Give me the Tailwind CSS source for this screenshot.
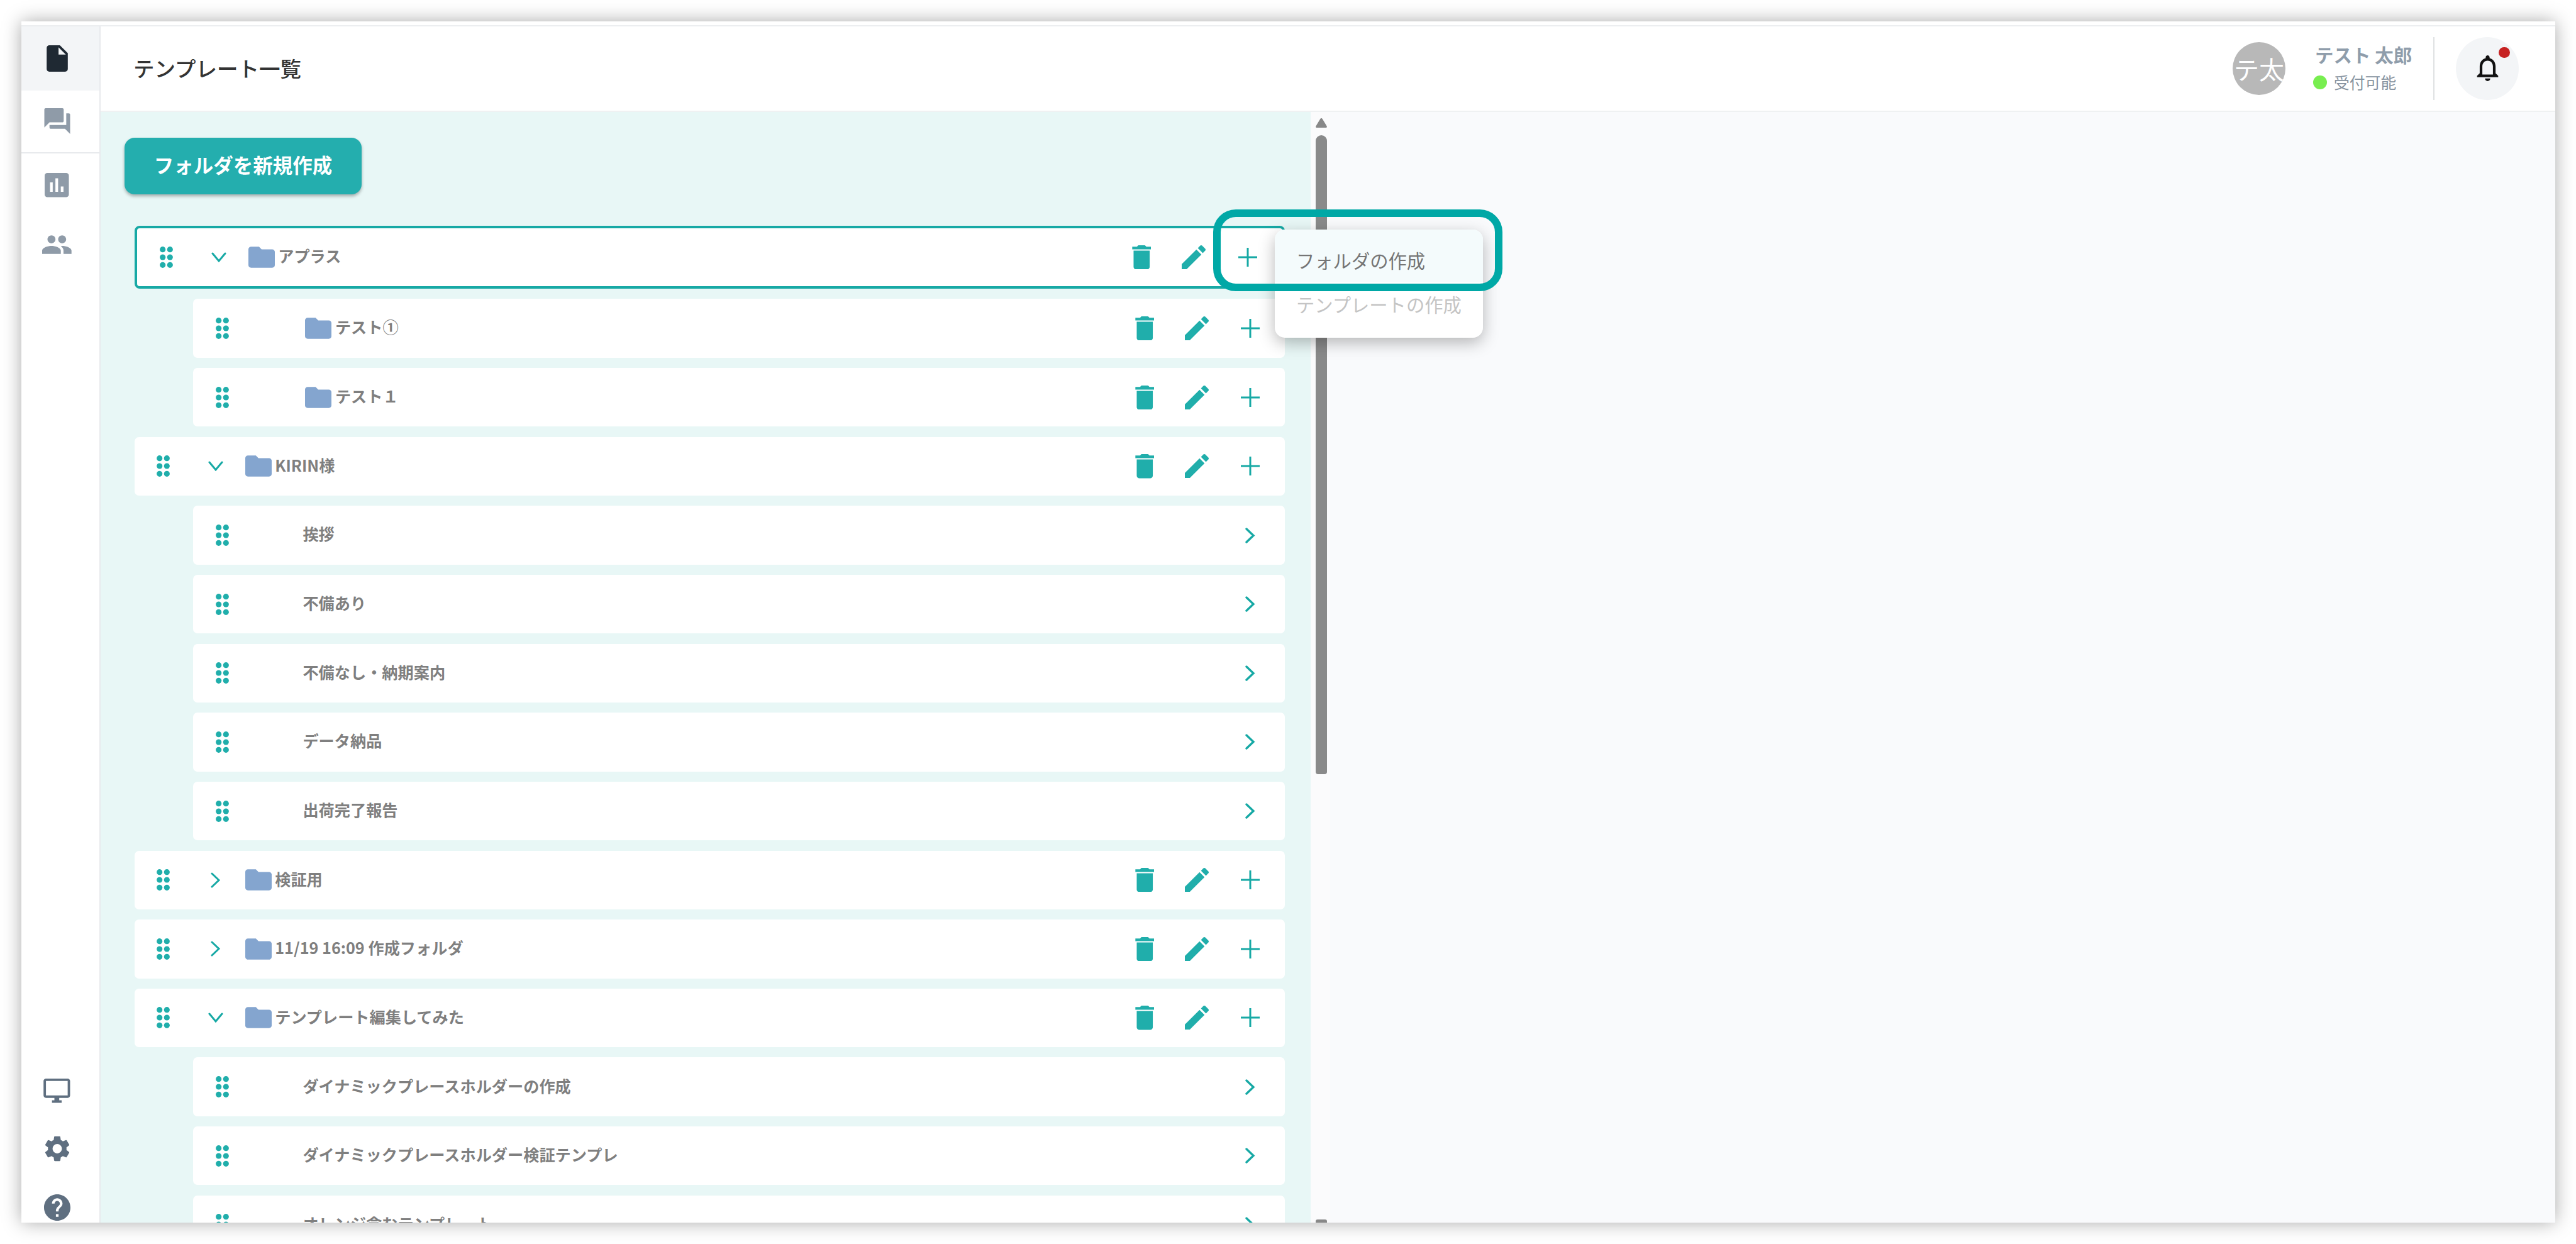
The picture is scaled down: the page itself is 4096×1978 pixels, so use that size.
<!DOCTYPE html>
<html lang="ja">
<head>
<meta charset="utf-8">
<title>テンプレート一覧</title>
<script src="https://cdn.jsdelivr.net/npm/@tailwindcss/browser@4"></script>
</head>
<body class="m-0 bg-white">
<div class="relative w-[4096px] h-[1978px] overflow-hidden bg-white pl-[34px] pt-[34px] font-['Noto_Sans_CJK_JP','Noto_Sans',sans-serif]">
  <div class="flex flex-col w-[4029px] h-[1910px] bg-white overflow-hidden shadow-[0_0_28px_rgba(0,0,0,0.34)]">
    <div class="h-[8px] shrink-0 border-b-2 border-[#eceef0]"></div>
    <div class="flex flex-1 min-h-0">
      <!-- sidebar -->
      <aside class="flex flex-col w-[126px] shrink-0 border-r-2 border-[#e8eaed]">
        <div class="flex items-center justify-center h-[101.5px] pr-[11px] bg-[#f3f5f7]">
          <svg class="w-[34px] h-[42px]" viewBox="4 2 16 20" fill="#1f2933"><path d="M6 2c-1.1 0-1.99.9-1.99 2L4 20c0 1.1.89 2 1.99 2H18c1.1 0 2-.9 2-2V8l-6-6H6zm7 7V3.5L18.5 9H13z"/></svg>
        </div>
        <div class="flex items-center justify-center h-[100px] pr-[11px] border-b-2 border-[#e8eaed]">
          <svg class="w-[42px] h-[41px]" viewBox="2 2 20 20" fill="#8f9ba8"><path d="M21 6h-2v9H6v2c0 .55.45 1 1 1h11l4 4V7c0-.55-.45-1-1-1zm-4 6V3c0-.55-.45-1-1-1H3c-.55 0-1 .45-1 1v14l4-4h10c.55 0 1-.45 1-1z"/></svg>
        </div>
        <div class="flex items-center justify-center h-[102px] pr-[11px]">
          <svg class="w-[38.5px] h-[38.5px]" viewBox="3 3 18 18" fill="#8f9ba8"><path d="M19 3H5c-1.1 0-2 .9-2 2v14c0 1.1.9 2 2 2h14c1.1 0 2-.9 2-2V5c0-1.1-.9-2-2-2zM9 17H7v-7h2v7zm4 0h-2V7h2v10zm4 0h-2v-4h2v4z"/></svg>
        </div>
        <div class="flex items-center justify-center h-[86px] pr-[11px]">
          <svg class="w-[46.7px] h-[30px]" viewBox="1 5 22 14" fill="#8f9ba8"><path d="M16 11c1.66 0 2.99-1.34 2.99-3S17.66 5 16 5c-1.66 0-3 1.34-3 3s1.34 3 3 3zm-8 0c1.66 0 2.99-1.34 2.99-3S9.66 5 8 5C6.34 5 5 6.34 5 8s1.34 3 3 3zm0 2c-2.33 0-7 1.17-7 3.5V19h14v-2.5c0-2.33-4.67-3.5-7-3.5zm8 0c-.29 0-.62.02-.97.05 1.16.84 1.97 1.97 1.97 3.45V19h6v-2.5c0-2.33-4.67-3.5-7-3.5z"/></svg>
        </div>
        <div class="mt-auto flex flex-col items-center gap-[52px] pb-[3.5px] pr-[11px]">
          <svg class="w-[46.7px] h-[38.4px]" viewBox="1 2 22 20" fill="#5f6f80"><path d="M21 2H3c-1.1 0-2 .9-2 2v12c0 1.1.9 2 2 2h7v2H8v2h8v-2h-2v-2h7c1.1 0 2-.9 2-2V4c0-1.1-.9-2-2-2zm0 14H3V4h18v12z"/></svg>
          <svg class="w-[40px] h-[41px]" viewBox="2.5 2 19 20" fill="#5f6f80"><path d="M19.14 12.94c.04-.3.06-.61.06-.94 0-.32-.02-.64-.07-.94l2.03-1.58c.18-.14.23-.41.12-.61l-1.92-3.32c-.12-.22-.37-.29-.59-.22l-2.39.96c-.5-.38-1.03-.7-1.62-.94l-.36-2.54c-.04-.24-.24-.41-.48-.41h-3.84c-.24 0-.43.17-.47.41l-.36 2.54c-.59.24-1.13.57-1.62.94l-2.39-.96c-.22-.08-.47 0-.59.22L2.74 8.87c-.12.21-.08.47.12.61l2.03 1.58c-.05.3-.09.63-.09.94s.02.64.07.94l-2.03 1.58c-.18.14-.23.41-.12.61l1.92 3.32c.12.22.37.29.59.22l2.39-.96c.5.38 1.03.7 1.62.94l.36 2.54c.05.24.24.41.48.41h3.84c.24 0 .44-.17.47-.41l.36-2.54c.59-.24 1.13-.56 1.62-.94l2.39.96c.22.08.47 0 .59-.22l1.92-3.32c.12-.22.07-.47-.12-.61l-2.01-1.58zM12 15.6c-1.98 0-3.6-1.62-3.6-3.6s1.62-3.6 3.6-3.6 3.6 1.62 3.6 3.6-1.62 3.6-3.6 3.6z"/></svg>
          <svg class="w-[42px] h-[42px]" viewBox="2 2 20 20" fill="#5f6f80"><path d="M12 2C6.48 2 2 6.48 2 12s4.48 10 10 10 10-4.48 10-10S17.52 2 12 2zm1 17h-2v-2h2v2zm2.07-7.75l-.9.92C13.45 12.9 13 13.5 13 15h-2v-.5c0-1.1.45-2.1 1.17-2.83l1.24-1.26c.37-.36.59-.86.59-1.41 0-1.1-.9-2-2-2s-2 .9-2 2H8c0-2.21 1.79-4 4-4s4 1.79 4 4c0 .88-.36 1.68-.93 2.25z"/></svg>
        </div>
      </aside>
      <!-- main -->
      <div class="flex flex-col flex-1 min-w-0">
        <header class="flex items-center h-[135.5px] shrink-0 pl-[52px] pr-[58px] border-b-2 border-[#eff1f2]">
          <h1 class="pb-[3px] text-[33.5px] leading-none font-medium text-[#333333]">テンプレート一覧</h1>
          <div class="ml-auto flex items-center">
            <div class="flex items-center justify-center w-[84px] h-[84px] rounded-full bg-[#b8b8b8] text-white text-[40px] leading-none whitespace-nowrap overflow-hidden">テ太</div>
            <div class="flex flex-col w-[191px] ml-[44px] gap-[15px]">
              <div class="pl-[3px] text-[29.5px] leading-[29px] font-bold text-[#8f9dab] whitespace-nowrap">テスト 太郎</div>
              <div class="flex items-center">
                <span class="w-[22px] h-[22px] rounded-full bg-[#78ee50]"></span>
                <span class="ml-[11px] text-[24.8px] leading-[29px] text-[#8693a0]">受付可能</span>
              </div>
            </div>
            <div class="w-[2px] h-[100px] bg-[#dfe1e3]"></div>
            <div class="relative flex items-center justify-center w-[100px] h-[100px] ml-[34px] rounded-full bg-[#f3f5f7]">
              <svg class="w-[35px] h-[41px]" viewBox="4 2.5 16 19.5" fill="#111111"><path d="M12 22c1.1 0 2-.9 2-2h-4c0 1.1.9 2 2 2zm6-6v-5c0-3.07-1.63-5.64-4.5-6.32V4c0-.83-.67-1.5-1.5-1.5s-1.5.67-1.5 1.5v.68C7.64 5.36 6 7.92 6 11v5l-2 2v1h16v-1l-2-2zm-2 1H8v-6c0-2.48 1.51-4.5 4-4.5s4 2.02 4 4.5v6z"/></svg>
              <span class="absolute left-[68px] top-[16px] w-[17.5px] h-[17.5px] rounded-full bg-[#c62222]"></span>
            </div>
          </div>
        </header>
        <div class="flex flex-1 min-h-0 bg-[#f9fafc]">
          <!-- list panel -->
          <section class="w-[1924px] shrink-0 overflow-hidden bg-[#e8f7f6] pt-[41px] pl-[38px]">
            <button class="flex items-center justify-center w-[377px] h-[90px] pb-[4px] rounded-[16px] bg-[#24aeae] text-white text-[31.5px] leading-none font-bold shadow-[0_3px_5px_rgba(0,0,0,0.3)]">フォルダを新規作成</button>
            <div class="flex flex-col gap-[16.35px] mt-[50px] ml-[15.7px] mr-[41px]">

              <!-- selected folder -->
              <div class="flex items-center shrink-0 h-[100.6px] rounded-[8px] bg-white border-4 border-[#17a9a5] pl-[36px] pr-[41px]">
                <svg class="w-[21px] h-[34px] shrink-0" viewBox="0 0 21 34" fill="#20aeab"><circle cx="4.7" cy="4.7" r="4.6"/><circle cx="16.3" cy="4.7" r="4.6"/><circle cx="4.7" cy="17" r="4.6"/><circle cx="16.3" cy="17" r="4.6"/><circle cx="4.7" cy="29.3" r="4.6"/><circle cx="16.3" cy="29.3" r="4.6"/></svg>
                <svg class="w-[24px] h-[16px] ml-[61px] shrink-0" viewBox="0 0 24 16" fill="none" stroke="#17a9a5" stroke-width="3" stroke-linecap="round"><path d="M2 2l10 12L22 2"/></svg>
                <svg class="w-[42px] h-[34px] ml-[35px] shrink-0" viewBox="2 4 20 16" fill="#84a5cf"><path d="M10 4H4c-1.1 0-2 .9-2 2v12c0 1.1.9 2 2 2h16c1.1 0 2-.9 2-2V8c0-1.1-.9-2-2-2h-8l-2-2z"/></svg>
                <span class="ml-[5.5px] pb-[4px] text-[25.2px] leading-none font-bold text-[#7f7f7f]">アプラス</span>
                <div class="ml-auto flex items-center">
                  <svg class="w-[30.5px] h-[38.4px]" viewBox="5 3 14 18" fill="#20aeab"><path d="M6 19c0 1.1.9 2 2 2h8c1.1 0 2-.9 2-2V7H6v12zM19 4h-3.5l-1-1h-5l-1 1H5v2h14V4z"/></svg>
                  <svg class="w-[38px] h-[38px] ml-[49px]" viewBox="3 3 18 18" fill="#20aeab"><path d="M3 17.25V21h3.75L17.81 9.94l-3.75-3.75L3 17.25zM20.71 7.04c.39-.39.39-1.02 0-1.41l-2.34-2.34c-.39-.39-1.02-.39-1.41 0l-1.83 1.83 3.75 3.75 1.83-1.83z"/></svg>
                  <svg class="w-[30px] h-[30px] ml-[52px] mr-[-1px]" viewBox="0 0 30 30" stroke="#17a9a5" stroke-width="3"><path d="M15 0v30M0 15h30"/></svg>
                </div>
              </div>

              <!-- テスト① -->
              <div class="flex items-center shrink-0 h-[93.3px] ml-[93.7px] rounded-[7px] bg-white pl-[36px] pr-[40px]">
                <svg class="w-[21px] h-[34px] shrink-0" viewBox="0 0 21 34" fill="#20aeab"><circle cx="4.7" cy="4.7" r="4.6"/><circle cx="16.3" cy="4.7" r="4.6"/><circle cx="4.7" cy="17" r="4.6"/><circle cx="16.3" cy="17" r="4.6"/><circle cx="4.7" cy="29.3" r="4.6"/><circle cx="16.3" cy="29.3" r="4.6"/></svg>
                <svg class="w-[42px] h-[34px] ml-[121px] shrink-0" viewBox="2 4 20 16" fill="#84a5cf"><path d="M10 4H4c-1.1 0-2 .9-2 2v12c0 1.1.9 2 2 2h16c1.1 0 2-.9 2-2V8c0-1.1-.9-2-2-2h-8l-2-2z"/></svg>
                <span class="ml-[5.5px] pb-[4px] text-[25.2px] leading-none font-bold text-[#7f7f7f]">テスト①</span>
                <div class="ml-auto flex items-center">
                  <svg class="w-[30.5px] h-[38.4px]" viewBox="5 3 14 18" fill="#20aeab"><path d="M6 19c0 1.1.9 2 2 2h8c1.1 0 2-.9 2-2V7H6v12zM19 4h-3.5l-1-1h-5l-1 1H5v2h14V4z"/></svg>
                  <svg class="w-[38px] h-[38px] ml-[49px]" viewBox="3 3 18 18" fill="#20aeab"><path d="M3 17.25V21h3.75L17.81 9.94l-3.75-3.75L3 17.25zM20.71 7.04c.39-.39.39-1.02 0-1.41l-2.34-2.34c-.39-.39-1.02-.39-1.41 0l-1.83 1.83 3.75 3.75 1.83-1.83z"/></svg>
                  <svg class="w-[30px] h-[30px] ml-[51px]" viewBox="0 0 30 30" stroke="#17a9a5" stroke-width="3"><path d="M15 0v30M0 15h30"/></svg>
                </div>
              </div>

              <!-- テスト１ -->
              <div class="flex items-center shrink-0 h-[93.3px] ml-[93.7px] rounded-[7px] bg-white pl-[36px] pr-[40px]">
                <svg class="w-[21px] h-[34px] shrink-0" viewBox="0 0 21 34" fill="#20aeab"><circle cx="4.7" cy="4.7" r="4.6"/><circle cx="16.3" cy="4.7" r="4.6"/><circle cx="4.7" cy="17" r="4.6"/><circle cx="16.3" cy="17" r="4.6"/><circle cx="4.7" cy="29.3" r="4.6"/><circle cx="16.3" cy="29.3" r="4.6"/></svg>
                <svg class="w-[42px] h-[34px] ml-[121px] shrink-0" viewBox="2 4 20 16" fill="#84a5cf"><path d="M10 4H4c-1.1 0-2 .9-2 2v12c0 1.1.9 2 2 2h16c1.1 0 2-.9 2-2V8c0-1.1-.9-2-2-2h-8l-2-2z"/></svg>
                <span class="ml-[5.5px] pb-[4px] text-[25.2px] leading-none font-bold text-[#7f7f7f]">テスト１</span>
                <div class="ml-auto flex items-center">
                  <svg class="w-[30.5px] h-[38.4px]" viewBox="5 3 14 18" fill="#20aeab"><path d="M6 19c0 1.1.9 2 2 2h8c1.1 0 2-.9 2-2V7H6v12zM19 4h-3.5l-1-1h-5l-1 1H5v2h14V4z"/></svg>
                  <svg class="w-[38px] h-[38px] ml-[49px]" viewBox="3 3 18 18" fill="#20aeab"><path d="M3 17.25V21h3.75L17.81 9.94l-3.75-3.75L3 17.25zM20.71 7.04c.39-.39.39-1.02 0-1.41l-2.34-2.34c-.39-.39-1.02-.39-1.41 0l-1.83 1.83 3.75 3.75 1.83-1.83z"/></svg>
                  <svg class="w-[30px] h-[30px] ml-[51px]" viewBox="0 0 30 30" stroke="#17a9a5" stroke-width="3"><path d="M15 0v30M0 15h30"/></svg>
                </div>
              </div>

              <!-- KIRIN様 -->
              <div class="flex items-center shrink-0 h-[93.3px] rounded-[7px] bg-white pl-[35px] pr-[40px]">
                <svg class="w-[21px] h-[34px] shrink-0" viewBox="0 0 21 34" fill="#20aeab"><circle cx="4.7" cy="4.7" r="4.6"/><circle cx="16.3" cy="4.7" r="4.6"/><circle cx="4.7" cy="17" r="4.6"/><circle cx="16.3" cy="17" r="4.6"/><circle cx="4.7" cy="29.3" r="4.6"/><circle cx="16.3" cy="29.3" r="4.6"/></svg>
                <svg class="w-[24px] h-[16px] ml-[61px] shrink-0" viewBox="0 0 24 16" fill="none" stroke="#17a9a5" stroke-width="3" stroke-linecap="round"><path d="M2 2l10 12L22 2"/></svg>
                <svg class="w-[42px] h-[34px] ml-[35px] shrink-0" viewBox="2 4 20 16" fill="#84a5cf"><path d="M10 4H4c-1.1 0-2 .9-2 2v12c0 1.1.9 2 2 2h16c1.1 0 2-.9 2-2V8c0-1.1-.9-2-2-2h-8l-2-2z"/></svg>
                <span class="ml-[5.5px] pb-[4px] text-[25.2px] leading-none font-bold text-[#7f7f7f]">KIRIN様</span>
                <div class="ml-auto flex items-center">
                  <svg class="w-[30.5px] h-[38.4px]" viewBox="5 3 14 18" fill="#20aeab"><path d="M6 19c0 1.1.9 2 2 2h8c1.1 0 2-.9 2-2V7H6v12zM19 4h-3.5l-1-1h-5l-1 1H5v2h14V4z"/></svg>
                  <svg class="w-[38px] h-[38px] ml-[49px]" viewBox="3 3 18 18" fill="#20aeab"><path d="M3 17.25V21h3.75L17.81 9.94l-3.75-3.75L3 17.25zM20.71 7.04c.39-.39.39-1.02 0-1.41l-2.34-2.34c-.39-.39-1.02-.39-1.41 0l-1.83 1.83 3.75 3.75 1.83-1.83z"/></svg>
                  <svg class="w-[30px] h-[30px] ml-[51px]" viewBox="0 0 30 30" stroke="#17a9a5" stroke-width="3"><path d="M15 0v30M0 15h30"/></svg>
                </div>
              </div>

              <!-- 挨拶 -->
              <div class="flex items-center shrink-0 h-[93.3px] ml-[93.7px] rounded-[7px] bg-white pl-[36px] pr-[47px]">
                <svg class="w-[21px] h-[34px] shrink-0" viewBox="0 0 21 34" fill="#20aeab"><circle cx="4.7" cy="4.7" r="4.6"/><circle cx="16.3" cy="4.7" r="4.6"/><circle cx="4.7" cy="17" r="4.6"/><circle cx="16.3" cy="17" r="4.6"/><circle cx="4.7" cy="29.3" r="4.6"/><circle cx="16.3" cy="29.3" r="4.6"/></svg>
                <span class="ml-[117px] pb-[4px] text-[25.2px] leading-none font-bold text-[#7f7f7f]">挨拶</span>
                <svg class="ml-auto w-[16px] h-[25px]" viewBox="0 0 16 25" fill="none" stroke="#17a9a5" stroke-width="3.4" stroke-linecap="round"><path d="M2 2l11 10.5L2 23"/></svg>
              </div>

              <!-- 不備あり -->
              <div class="flex items-center shrink-0 h-[93.3px] ml-[93.7px] rounded-[7px] bg-white pl-[36px] pr-[47px]">
                <svg class="w-[21px] h-[34px] shrink-0" viewBox="0 0 21 34" fill="#20aeab"><circle cx="4.7" cy="4.7" r="4.6"/><circle cx="16.3" cy="4.7" r="4.6"/><circle cx="4.7" cy="17" r="4.6"/><circle cx="16.3" cy="17" r="4.6"/><circle cx="4.7" cy="29.3" r="4.6"/><circle cx="16.3" cy="29.3" r="4.6"/></svg>
                <span class="ml-[117px] pb-[4px] text-[25.2px] leading-none font-bold text-[#7f7f7f]">不備あり</span>
                <svg class="ml-auto w-[16px] h-[25px]" viewBox="0 0 16 25" fill="none" stroke="#17a9a5" stroke-width="3.4" stroke-linecap="round"><path d="M2 2l11 10.5L2 23"/></svg>
              </div>

              <!-- 不備なし・納期案内 -->
              <div class="flex items-center shrink-0 h-[93.3px] ml-[93.7px] rounded-[7px] bg-white pl-[36px] pr-[47px]">
                <svg class="w-[21px] h-[34px] shrink-0" viewBox="0 0 21 34" fill="#20aeab"><circle cx="4.7" cy="4.7" r="4.6"/><circle cx="16.3" cy="4.7" r="4.6"/><circle cx="4.7" cy="17" r="4.6"/><circle cx="16.3" cy="17" r="4.6"/><circle cx="4.7" cy="29.3" r="4.6"/><circle cx="16.3" cy="29.3" r="4.6"/></svg>
                <span class="ml-[117px] pb-[4px] text-[25.2px] leading-none font-bold text-[#7f7f7f]">不備なし・納期案内</span>
                <svg class="ml-auto w-[16px] h-[25px]" viewBox="0 0 16 25" fill="none" stroke="#17a9a5" stroke-width="3.4" stroke-linecap="round"><path d="M2 2l11 10.5L2 23"/></svg>
              </div>

              <!-- データ納品 -->
              <div class="flex items-center shrink-0 h-[93.3px] ml-[93.7px] rounded-[7px] bg-white pl-[36px] pr-[47px]">
                <svg class="w-[21px] h-[34px] shrink-0" viewBox="0 0 21 34" fill="#20aeab"><circle cx="4.7" cy="4.7" r="4.6"/><circle cx="16.3" cy="4.7" r="4.6"/><circle cx="4.7" cy="17" r="4.6"/><circle cx="16.3" cy="17" r="4.6"/><circle cx="4.7" cy="29.3" r="4.6"/><circle cx="16.3" cy="29.3" r="4.6"/></svg>
                <span class="ml-[117px] pb-[4px] text-[25.2px] leading-none font-bold text-[#7f7f7f]">データ納品</span>
                <svg class="ml-auto w-[16px] h-[25px]" viewBox="0 0 16 25" fill="none" stroke="#17a9a5" stroke-width="3.4" stroke-linecap="round"><path d="M2 2l11 10.5L2 23"/></svg>
              </div>

              <!-- 出荷完了報告 -->
              <div class="flex items-center shrink-0 h-[93.3px] ml-[93.7px] rounded-[7px] bg-white pl-[36px] pr-[47px]">
                <svg class="w-[21px] h-[34px] shrink-0" viewBox="0 0 21 34" fill="#20aeab"><circle cx="4.7" cy="4.7" r="4.6"/><circle cx="16.3" cy="4.7" r="4.6"/><circle cx="4.7" cy="17" r="4.6"/><circle cx="16.3" cy="17" r="4.6"/><circle cx="4.7" cy="29.3" r="4.6"/><circle cx="16.3" cy="29.3" r="4.6"/></svg>
                <span class="ml-[117px] pb-[4px] text-[25.2px] leading-none font-bold text-[#7f7f7f]">出荷完了報告</span>
                <svg class="ml-auto w-[16px] h-[25px]" viewBox="0 0 16 25" fill="none" stroke="#17a9a5" stroke-width="3.4" stroke-linecap="round"><path d="M2 2l11 10.5L2 23"/></svg>
              </div>

              <!-- 検証用 -->
              <div class="flex items-center shrink-0 h-[93.3px] rounded-[7px] bg-white pl-[35px] pr-[40px]">
                <svg class="w-[21px] h-[34px] shrink-0" viewBox="0 0 21 34" fill="#20aeab"><circle cx="4.7" cy="4.7" r="4.6"/><circle cx="16.3" cy="4.7" r="4.6"/><circle cx="4.7" cy="17" r="4.6"/><circle cx="16.3" cy="17" r="4.6"/><circle cx="4.7" cy="29.3" r="4.6"/><circle cx="16.3" cy="29.3" r="4.6"/></svg>
                <span class="flex justify-center w-[24px] ml-[61px] shrink-0"><svg class="w-[16px] h-[25px]" viewBox="0 0 16 25" fill="none" stroke="#17a9a5" stroke-width="3" stroke-linecap="round"><path d="M2 2l11 10.5L2 23"/></svg></span>
                <svg class="w-[42px] h-[34px] ml-[35px] shrink-0" viewBox="2 4 20 16" fill="#84a5cf"><path d="M10 4H4c-1.1 0-2 .9-2 2v12c0 1.1.9 2 2 2h16c1.1 0 2-.9 2-2V8c0-1.1-.9-2-2-2h-8l-2-2z"/></svg>
                <span class="ml-[5.5px] pb-[4px] text-[25.2px] leading-none font-bold text-[#7f7f7f]">検証用</span>
                <div class="ml-auto flex items-center">
                  <svg class="w-[30.5px] h-[38.4px]" viewBox="5 3 14 18" fill="#20aeab"><path d="M6 19c0 1.1.9 2 2 2h8c1.1 0 2-.9 2-2V7H6v12zM19 4h-3.5l-1-1h-5l-1 1H5v2h14V4z"/></svg>
                  <svg class="w-[38px] h-[38px] ml-[49px]" viewBox="3 3 18 18" fill="#20aeab"><path d="M3 17.25V21h3.75L17.81 9.94l-3.75-3.75L3 17.25zM20.71 7.04c.39-.39.39-1.02 0-1.41l-2.34-2.34c-.39-.39-1.02-.39-1.41 0l-1.83 1.83 3.75 3.75 1.83-1.83z"/></svg>
                  <svg class="w-[30px] h-[30px] ml-[51px]" viewBox="0 0 30 30" stroke="#17a9a5" stroke-width="3"><path d="M15 0v30M0 15h30"/></svg>
                </div>
              </div>

              <!-- 11/19 16:09 作成フォルダ -->
              <div class="flex items-center shrink-0 h-[93.3px] rounded-[7px] bg-white pl-[35px] pr-[40px]">
                <svg class="w-[21px] h-[34px] shrink-0" viewBox="0 0 21 34" fill="#20aeab"><circle cx="4.7" cy="4.7" r="4.6"/><circle cx="16.3" cy="4.7" r="4.6"/><circle cx="4.7" cy="17" r="4.6"/><circle cx="16.3" cy="17" r="4.6"/><circle cx="4.7" cy="29.3" r="4.6"/><circle cx="16.3" cy="29.3" r="4.6"/></svg>
                <span class="flex justify-center w-[24px] ml-[61px] shrink-0"><svg class="w-[16px] h-[25px]" viewBox="0 0 16 25" fill="none" stroke="#17a9a5" stroke-width="3" stroke-linecap="round"><path d="M2 2l11 10.5L2 23"/></svg></span>
                <svg class="w-[42px] h-[34px] ml-[35px] shrink-0" viewBox="2 4 20 16" fill="#84a5cf"><path d="M10 4H4c-1.1 0-2 .9-2 2v12c0 1.1.9 2 2 2h16c1.1 0 2-.9 2-2V8c0-1.1-.9-2-2-2h-8l-2-2z"/></svg>
                <span class="ml-[5.5px] pb-[4px] text-[25.2px] leading-none font-bold text-[#7f7f7f]">11/19 16:09 作成フォルダ</span>
                <div class="ml-auto flex items-center">
                  <svg class="w-[30.5px] h-[38.4px]" viewBox="5 3 14 18" fill="#20aeab"><path d="M6 19c0 1.1.9 2 2 2h8c1.1 0 2-.9 2-2V7H6v12zM19 4h-3.5l-1-1h-5l-1 1H5v2h14V4z"/></svg>
                  <svg class="w-[38px] h-[38px] ml-[49px]" viewBox="3 3 18 18" fill="#20aeab"><path d="M3 17.25V21h3.75L17.81 9.94l-3.75-3.75L3 17.25zM20.71 7.04c.39-.39.39-1.02 0-1.41l-2.34-2.34c-.39-.39-1.02-.39-1.41 0l-1.83 1.83 3.75 3.75 1.83-1.83z"/></svg>
                  <svg class="w-[30px] h-[30px] ml-[51px]" viewBox="0 0 30 30" stroke="#17a9a5" stroke-width="3"><path d="M15 0v30M0 15h30"/></svg>
                </div>
              </div>

              <!-- テンプレート編集してみた -->
              <div class="flex items-center shrink-0 h-[93.3px] rounded-[7px] bg-white pl-[35px] pr-[40px]">
                <svg class="w-[21px] h-[34px] shrink-0" viewBox="0 0 21 34" fill="#20aeab"><circle cx="4.7" cy="4.7" r="4.6"/><circle cx="16.3" cy="4.7" r="4.6"/><circle cx="4.7" cy="17" r="4.6"/><circle cx="16.3" cy="17" r="4.6"/><circle cx="4.7" cy="29.3" r="4.6"/><circle cx="16.3" cy="29.3" r="4.6"/></svg>
                <svg class="w-[24px] h-[16px] ml-[61px] shrink-0" viewBox="0 0 24 16" fill="none" stroke="#17a9a5" stroke-width="3" stroke-linecap="round"><path d="M2 2l10 12L22 2"/></svg>
                <svg class="w-[42px] h-[34px] ml-[35px] shrink-0" viewBox="2 4 20 16" fill="#84a5cf"><path d="M10 4H4c-1.1 0-2 .9-2 2v12c0 1.1.9 2 2 2h16c1.1 0 2-.9 2-2V8c0-1.1-.9-2-2-2h-8l-2-2z"/></svg>
                <span class="ml-[5.5px] pb-[4px] text-[25.2px] leading-none font-bold text-[#7f7f7f]">テンプレート編集してみた</span>
                <div class="ml-auto flex items-center">
                  <svg class="w-[30.5px] h-[38.4px]" viewBox="5 3 14 18" fill="#20aeab"><path d="M6 19c0 1.1.9 2 2 2h8c1.1 0 2-.9 2-2V7H6v12zM19 4h-3.5l-1-1h-5l-1 1H5v2h14V4z"/></svg>
                  <svg class="w-[38px] h-[38px] ml-[49px]" viewBox="3 3 18 18" fill="#20aeab"><path d="M3 17.25V21h3.75L17.81 9.94l-3.75-3.75L3 17.25zM20.71 7.04c.39-.39.39-1.02 0-1.41l-2.34-2.34c-.39-.39-1.02-.39-1.41 0l-1.83 1.83 3.75 3.75 1.83-1.83z"/></svg>
                  <svg class="w-[30px] h-[30px] ml-[51px]" viewBox="0 0 30 30" stroke="#17a9a5" stroke-width="3"><path d="M15 0v30M0 15h30"/></svg>
                </div>
              </div>

              <!-- ダイナミックプレースホルダーの作成 -->
              <div class="flex items-center shrink-0 h-[93.3px] ml-[93.7px] rounded-[7px] bg-white pl-[36px] pr-[47px]">
                <svg class="w-[21px] h-[34px] shrink-0" viewBox="0 0 21 34" fill="#20aeab"><circle cx="4.7" cy="4.7" r="4.6"/><circle cx="16.3" cy="4.7" r="4.6"/><circle cx="4.7" cy="17" r="4.6"/><circle cx="16.3" cy="17" r="4.6"/><circle cx="4.7" cy="29.3" r="4.6"/><circle cx="16.3" cy="29.3" r="4.6"/></svg>
                <span class="ml-[117px] pb-[4px] text-[25.2px] leading-none font-bold text-[#7f7f7f]">ダイナミックプレースホルダーの作成</span>
                <svg class="ml-auto w-[16px] h-[25px]" viewBox="0 0 16 25" fill="none" stroke="#17a9a5" stroke-width="3.4" stroke-linecap="round"><path d="M2 2l11 10.5L2 23"/></svg>
              </div>

              <!-- ダイナミックプレースホルダー検証テンプレ -->
              <div class="flex items-center shrink-0 h-[93.3px] ml-[93.7px] rounded-[7px] bg-white pl-[36px] pr-[47px]">
                <svg class="w-[21px] h-[34px] shrink-0" viewBox="0 0 21 34" fill="#20aeab"><circle cx="4.7" cy="4.7" r="4.6"/><circle cx="16.3" cy="4.7" r="4.6"/><circle cx="4.7" cy="17" r="4.6"/><circle cx="16.3" cy="17" r="4.6"/><circle cx="4.7" cy="29.3" r="4.6"/><circle cx="16.3" cy="29.3" r="4.6"/></svg>
                <span class="ml-[117px] pb-[4px] text-[25.2px] leading-none font-bold text-[#7f7f7f]">ダイナミックプレースホルダー検証テンプレ</span>
                <svg class="ml-auto w-[16px] h-[25px]" viewBox="0 0 16 25" fill="none" stroke="#17a9a5" stroke-width="3.4" stroke-linecap="round"><path d="M2 2l11 10.5L2 23"/></svg>
              </div>

              <!-- clipped last row -->
              <div class="flex items-center shrink-0 h-[93.3px] ml-[93.7px] rounded-[7px] bg-white pl-[36px] pr-[47px]">
                <svg class="w-[21px] h-[34px] shrink-0" viewBox="0 0 21 34" fill="#20aeab"><circle cx="4.7" cy="4.7" r="4.6"/><circle cx="16.3" cy="4.7" r="4.6"/><circle cx="4.7" cy="17" r="4.6"/><circle cx="16.3" cy="17" r="4.6"/><circle cx="4.7" cy="29.3" r="4.6"/><circle cx="16.3" cy="29.3" r="4.6"/></svg>
                <span class="ml-[117px] pb-[4px] text-[25.2px] leading-none font-bold text-[#7f7f7f]">オレンジ含むテンプレート</span>
                <svg class="ml-auto w-[16px] h-[25px]" viewBox="0 0 16 25" fill="none" stroke="#17a9a5" stroke-width="3.4" stroke-linecap="round"><path d="M2 2l11 10.5L2 23"/></svg>
              </div>
            </div>
          </section>
          <!-- scrollbar -->
          <div class="flex flex-col w-[31px] shrink-0 bg-[#fbfbfc] pl-[7.5px] pt-[10px]">
            <svg class="w-[18px] h-[15px] shrink-0" viewBox="0 0 18 15" fill="#888888"><path d="M9 0c1 0 1.6.7 2 1.4l6.6 11c.7 1.2 0 2.6-1.4 2.6H1.800c-1.400 0-2.100-1.400-1.400-2.600l6.600-11C7.400.7 8 0 9 0z"/></svg>
            <div class="w-[18px] h-[1016px] mt-[12px] shrink-0 rounded-t-[9px] rounded-b-[4px] bg-[#8a8a8a]"></div>
            <div class="w-[18px] h-[5px] mt-auto shrink-0 rounded-t-[3px] bg-[#888888]"></div>
          </div>
        </div>
      </div>
    </div>
  </div>

  <!-- dropdown over the list -->
  <div class="absolute left-[2027px] top-[364.7px] flex flex-col w-[331px] h-[172.4px] rounded-[16px] bg-white overflow-hidden shadow-[0_8px_26px_rgba(0,0,0,0.28)]">
    <div class="flex items-center h-[84px] shrink-0 pt-[14px] pl-[34px] bg-[#f4fbfc] text-[29.3px] leading-none text-[#757575]">フォルダの作成</div>
    <div class="flex items-center h-[69px] shrink-0 pl-[34px] text-[29.3px] leading-none text-[#c4c4c4]">テンプレートの作成</div>
  </div>
  <!-- highlight annotation -->
  <div class="absolute left-[1929px] top-[332.5px] w-[460px] h-[130.5px] rounded-[36px] border-[12.5px] border-[#00a8a6]"></div>
</div>
</body>
</html>
